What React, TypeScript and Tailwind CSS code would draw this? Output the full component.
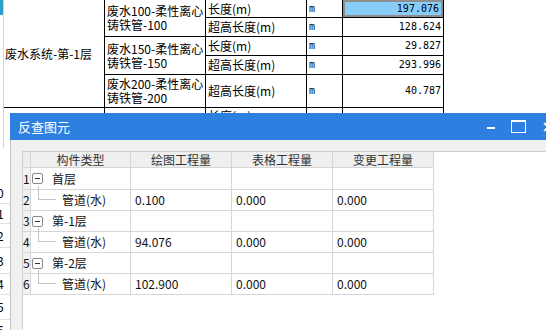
import React from "react";

const sheetFont = "font-['Noto_Sans_CJK_SC','Noto_Sans',sans-serif]";
const monoFont = "font-['DejaVu_Sans_Mono',monospace]";

function Cell({ children, className = "" }: { children?: React.ReactNode; className?: string }) {
  return <div className={`bg-white overflow-hidden ${className}`}>{children}</div>;
}

function UnitCell() {
  return (
    <Cell className="flex items-center pl-[2px]">
      <span className={`${monoFont} text-[10px] leading-none`}>m</span>
    </Cell>
  );
}

function NumCell({ v, hl = false }: { v: string; hl?: boolean }) {
  return (
    <div
      className={`flex items-center justify-end pr-[2px] ${hl ? "bg-[#88cdf9] border-2 border-[#8e8e8e]" : "bg-white"}`}
    >
      <span className={`${monoFont} text-[10px] leading-none text-black`}>{v}</span>
    </div>
  );
}

function TypeCell({ t }: { t: string }) {
  return (
    <Cell className="flex items-center pl-[2px] text-[12px] leading-none whitespace-nowrap">{t}</Cell>
  );
}

function PipeCell({ a, b }: { a: string; b: string }) {
  return (
    <Cell className="flex flex-col justify-center pl-[2px] text-[12px] leading-[14px] whitespace-nowrap">
      <span>{a}</span>
      <span>{b}</span>
    </Cell>
  );
}

type Row = { n: number; kind: "floor" | "item"; label: string; v1?: string; v2?: string; v3?: string };

const rows: Row[] = [
  { n: 1, kind: "floor", label: "首层" },
  { n: 2, kind: "item", label: "管道(水)", v1: "0.100", v2: "0.000", v3: "0.000" },
  { n: 3, kind: "floor", label: "第-1层" },
  { n: 4, kind: "item", label: "管道(水)", v1: "94.076", v2: "0.000", v3: "0.000" },
  { n: 5, kind: "floor", label: "第-2层" },
  { n: 6, kind: "item", label: "管道(水)", v1: "102.900", v2: "0.000", v3: "0.000" },
];

const line = "border-[#d6d6d6]";

export default function App() {
  return (
    <div className={`relative w-[546px] h-[330px] overflow-hidden bg-white text-black ${sheetFont}`}>
      {/* background sheet */}
      <div className="flex">
        <div className="w-[4px] h-[148px] border-r border-[#d4d4d4] flex flex-col">
          <div className="h-[15px] w-[3px] bg-[#2aa0c8]" />
        </div>
        <div className="grid grid-cols-[100px_100px_100px_35px_100px] grid-rows-[17px_18px_18px_18px_32px_40px] gap-px bg-black border-r border-black w-[440px]">
          <Cell className="row-span-5 flex items-center pl-[1px] text-[12px] whitespace-nowrap">
            废水系统-第-1层
          </Cell>
          <div className="row-span-2 bg-white flex">
            <PipeCell a="废水100-柔性离心" b="铸铁管-100" />
          </div>
          <TypeCell t="长度(m)" />
          <UnitCell />
          <NumCell v="197.076" hl />
          <TypeCell t="超高长度(m)" />
          <UnitCell />
          <NumCell v="128.624" />
          <div className="row-span-2 bg-white flex">
            <PipeCell a="废水150-柔性离心" b="铸铁管-150" />
          </div>
          <TypeCell t="长度(m)" />
          <UnitCell />
          <NumCell v="29.827" />
          <TypeCell t="超高长度(m)" />
          <UnitCell />
          <NumCell v="293.996" />
          <PipeCell a="废水200-柔性离心" b="铸铁管-200" />
          <TypeCell t="超高长度(m)" />
          <UnitCell />
          <NumCell v="40.787" />
          <Cell />
          <Cell />
          <Cell className="pl-[2px] pt-[2px] text-[12px] leading-none">长度(m)</Cell>
          <Cell />
          <Cell />
        </div>
      </div>
      {/* left strip under the dialog */}
      <div className="flex flex-col w-[10px] pt-[34px] text-[12px] leading-none">
        {[
          ["0", 22],
          ["1", 20],
          ["2", 24],
          ["3", 26],
          ["4", 21],
          ["5", 25],
          ["6", 20],
        ].map(([d, h]) => (
          <div key={d as string} className="flex items-center -ml-[3px] border-b border-[#e0e0e0]" style={{ height: h as number }}>
            {d}
          </div>
        ))}
      </div>

      {/* dialog window */}
      <div className="absolute left-[10px] top-[113px] w-[560px] h-[240px] flex flex-col">
        <div className="h-[27px] bg-[#2d7fe0] flex items-center pl-[8px] text-white shrink-0">
          <span className="w-[469px] text-[13px] leading-none">反查图元</span>
          <div className="w-[8px] h-[2px] bg-white mt-[3px]" />
          <div className="ml-[16px] w-[15px] h-[13px] border border-white border-t-2" />
          <svg className="ml-[17px]" width="10" height="10" viewBox="0 0 10 10">
            <path d="M1 1 L9 9 M9 1 L1 9" stroke="white" strokeWidth="1.6" />
          </svg>
        </div>
        <div className="flex-1 bg-[#f0f0f0] border-l border-[#c4c4c4] pl-[11px] pt-[11px] flex">
          <div className="flex-1 bg-white border-l border-t border-[#cfcfcf] flex flex-col text-[12px] text-[#111]">
            {/* header */}
            <div className="flex h-[16px]">
              <div className={`w-[8px] bg-[#ececec] border-r border-b ${line}`} />
              {["构件类型", "绘图工程量", "表格工程量", "变更工程量"].map((h, i) => (
                <div
                  key={h}
                  className={`${i === 0 ? "w-[100px]" : "w-[101px]"} bg-[#efefef] border-r border-b ${line} flex items-center justify-center leading-none text-[#333]`}
                >
                  {h}
                </div>
              ))}
            </div>
            {rows.map((r, idx) => (
              <div key={r.n} className={`flex ${idx === 0 ? "h-[22px]" : "h-[21px]"}`}>
                <div className={`w-[8px] bg-[#f2f2f2] border-r border-b ${line} flex items-center leading-none`}>
                  {r.n}
                </div>
                <div className={`w-[100px] border-r border-b ${line} relative flex items-center leading-none whitespace-nowrap`}>
                  {r.kind === "floor" ? (
                    <>
                      <div className="ml-[1px] w-[11px] h-[11px] border border-[#8a8a8a] rounded-[2px] bg-white flex items-center justify-center">
                        <div className="w-[5px] h-px bg-[#333]" />
                      </div>
                      <span className="ml-[9px]">{r.label}</span>
                    </>
                  ) : (
                    <>
                      <div className="absolute left-[7px] top-[-4px] h-[14px] border-l border-[#c4c4c4]" />
                      <div className="absolute left-[7px] top-[9px] w-[18px] border-t border-[#c4c4c4]" />
                      <span className="ml-[31px]">{r.label}</span>
                    </>
                  )}
                </div>
                {[r.v1, r.v2, r.v3].map((v, i) => (
                  <div key={i} className={`w-[101px] border-r border-b ${line} flex items-center pl-[4px] leading-none`}>
                    {v ?? ""}
                  </div>
                ))}
              </div>
            ))}
          </div>
        </div>
      </div>
    </div>
  );
}
